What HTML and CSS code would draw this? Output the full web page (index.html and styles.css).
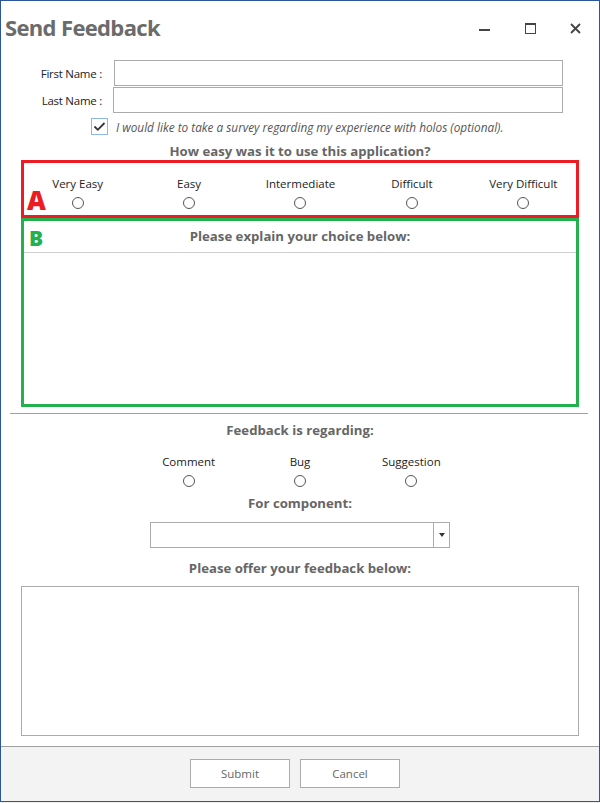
FILE: index.html
```html
<!DOCTYPE html>
<html>
<head>
<meta charset="utf-8">
<link rel="stylesheet" href="styles.css">
</head>
<body>
<div class="window">
  <div class="titlebar">
    <h1 class="title">Send Feedback</h1>
    <div class="controls">
      <span class="ctl ctl-min"><svg width="12" height="12" viewBox="0 0 12 12"><rect x="0" y="6" width="11" height="2" fill="#444"/></svg></span>
      <span class="ctl ctl-max"><svg width="12" height="12" viewBox="0 0 12 12"><rect x="0.5" y="0.5" width="10" height="10" fill="none" stroke="#444"/><rect x="0" y="0" width="11" height="2" fill="#444"/></svg></span>
      <span class="ctl ctl-close"><svg width="12" height="12" viewBox="0 0 12 12"><path d="M1 1 L10 10 M10 1 L1 10" stroke="#444" stroke-width="1.8"/></svg></span>
    </div>
  </div>

  <div class="form">
    <div class="name-grid">
      <label class="name-label">First Name :</label>
      <div class="textbox tb-first"></div>
      <label class="name-label">Last Name :</label>
      <div class="textbox tb-last"></div>
    </div>

    <div class="check-row">
      <span class="checkbox"><svg width="15" height="15" viewBox="0 0 15 15"><path d="M2.5 7.5 L5.8 10.8 L12.5 4" fill="none" stroke="#333" stroke-width="1.8"/></svg></span>
      <span class="check-text">I would like to take a survey regarding my experience with holos (optional).</span>
    </div>

    <div class="heading h-easy">How easy was it to use this application?</div>

    <div class="box box-a">
      <span class="tag tag-a">A</span>
      <div class="scale">
        <div class="opt"><span class="opt-label">Very Easy</span><span class="radio"></span></div>
        <div class="opt"><span class="opt-label">Easy</span><span class="radio"></span></div>
        <div class="opt"><span class="opt-label">Intermediate</span><span class="radio"></span></div>
        <div class="opt"><span class="opt-label">Difficult</span><span class="radio"></span></div>
        <div class="opt"><span class="opt-label">Very Difficult</span><span class="radio"></span></div>
      </div>
    </div>

    <div class="box box-b">
      <span class="tag tag-b">B</span>
      <div class="explain-head">Please explain your choice below:</div>
      <div class="explain-body"></div>
    </div>

    <div class="divider"></div>

    <div class="heading h-regarding">Feedback is regarding:</div>
    <div class="kinds">
      <div class="opt"><span class="opt-label">Comment</span><span class="radio"></span></div>
      <div class="opt"><span class="opt-label">Bug</span><span class="radio"></span></div>
      <div class="opt"><span class="opt-label">Suggestion</span><span class="radio"></span></div>
    </div>

    <div class="heading h-component">For component:</div>
    <div class="combo">
      <div class="combo-field"></div>
      <div class="combo-btn"><svg width="6" height="4" viewBox="0 0 6 4"><path d="M0 0 L6 0 L3 4 Z" fill="#333"/></svg></div>
    </div>

    <div class="heading h-offer">Please offer your feedback below:</div>
    <div class="feedback-area"></div>
  </div>

  <div class="footer">
    <button class="btn">Submit</button>
    <button class="btn">Cancel</button>
  </div>
</div>
</body>
</html>
```

FILE: styles.css
```css
* { box-sizing: border-box; }

html, body {
  margin: 0;
  padding: 0;
  background: #f0f0f0;
}

body {
  width: 600px;
  height: 803px;
  font-family: "Open Sans", "Noto Sans", sans-serif;
  font-size: 11.5px;
  color: #222;
}

.window {
  width: 600px;
  height: 802px;
  border: 1px solid #2b579a;
  background: #fff;
  display: flex;
  flex-direction: column;
}

.titlebar {
  height: 54px;
  display: flex;
  align-items: center;
  padding-left: 4px;
  flex: none;
}

.title {
  margin: 0;
  font-size: 22px;
  font-weight: 700;
  color: #6b6b6b;
  letter-spacing: -0.65px;
  flex: 1;
  line-height: 1;
  padding-bottom: 2px;
}

.controls {
  display: flex;
  align-items: center;
  padding-top: 2px;
}

.ctl {
  display: flex;
  width: 12px;
  height: 12px;
}

.ctl-min { margin-right: 34px; }
.ctl-max { margin-right: 33px; }
.ctl-close { margin-right: 17px; }

.form {
  flex: 1;
  padding: 0 20px;
  display: flex;
  flex-direction: column;
}

.name-grid {
  margin-top: 5px;
  display: grid;
  grid-template-columns: 81px 450px;
  column-gap: 11px;
  row-gap: 1px;
  align-items: center;
}

.name-label {
  text-align: right;
  color: #222;
  letter-spacing: -0.25px;
}

.textbox {
  height: 26px;
  border: 1px solid #ababab;
  background: #fff;
}

.tb-first { margin-left: 1px; }
.tb-last { height: 26px; }

.check-row {
  margin-top: 5px;
  padding-left: 70px;
  display: flex;
  align-items: center;
  height: 17px;
}

.checkbox {
  width: 17px;
  height: 17px;
  border: 1px solid #8fb8ea;
  display: flex;
  align-items: center;
  justify-content: center;
  margin-right: 8px;
}

.check-text {
  font-style: italic;
  font-size: 11.8px;
  color: #555;
}

.heading {
  text-align: center;
  font-weight: 700;
  color: #666;
  font-size: 13.2px;
  line-height: 16px;
  height: 16px;
}

.h-easy { margin-top: 8px; }

.box {
  position: relative;
}

.box-a {
  margin: 1px 0 0 0;
  height: 58px;
  border: 3px solid #ed1c24;
  padding-top: 13px;
}

.tag {
  position: absolute;
  font-family: "Open Sans", sans-serif;
  font-weight: 800;
  line-height: 1;
}

.tag-a {
  left: 3px;
  top: 24px;
  font-size: 26px;
  color: #ed1c24;
}

.tag-b {
  left: 5px;
  top: 7px;
  font-size: 21px;
  color: #22b14c;
}

.scale {
  margin: 0 -3px 0 -2px;
  display: grid;
  grid-template-columns: repeat(5, 1fr);
}

.kinds {
  margin: 16px auto 0;
  width: 334px;
  display: grid;
  grid-template-columns: repeat(3, 1fr);
}

.opt {
  display: flex;
  flex-direction: column;
  align-items: center;
}

.opt-label {
  line-height: 16px;
  height: 16px;
  color: #222;
}

.radio {
  margin-top: 5px;
  width: 12px;
  height: 12px;
  border-radius: 50%;
  border: 1px solid #555;
  background: #fff;
}

.box-b {
  height: 189px;
  border: 3px solid #22b14c;
}

.explain-head {
  height: 32px;
  border-bottom: 1px solid #cfcfcf;
  text-align: center;
  font-weight: 700;
  color: #666;
  font-size: 13.2px;
  line-height: 31px;
}

.divider {
  margin: 6px -9px 0 -11px;
  height: 1px;
  background: #a0a0a0;
}

.h-regarding { margin-top: 8px; }

.h-component { margin-top: 8px; }

.combo {
  margin: 11px auto 0;
  width: 300px;
  height: 26px;
  border: 1px solid #ababab;
  display: flex;
}

.combo-field { flex: 1; }

.combo-btn {
  width: 16px;
  border-left: 1px solid #ababab;
  display: flex;
  align-items: center;
  justify-content: center;
}

.h-offer { margin-top: 12px; }

.feedback-area {
  margin-top: 10px;
  height: 150px;
  border: 1px solid #ababab;
}

.footer {
  height: 55px;
  flex: none;
  border-top: 1px solid #a0a0a0;
  background: #f3f3f3;
  display: flex;
  justify-content: center;
  align-items: flex-start;
  gap: 10px;
  padding: 12px 10px 0 0;
}

.btn {
  width: 100px;
  height: 29px;
  border: 1px solid #ababab;
  background: #fff;
  font-family: "Open Sans", "Noto Sans", sans-serif;
  font-size: 11.5px;
  color: #666;
  padding: 0;
}
```
